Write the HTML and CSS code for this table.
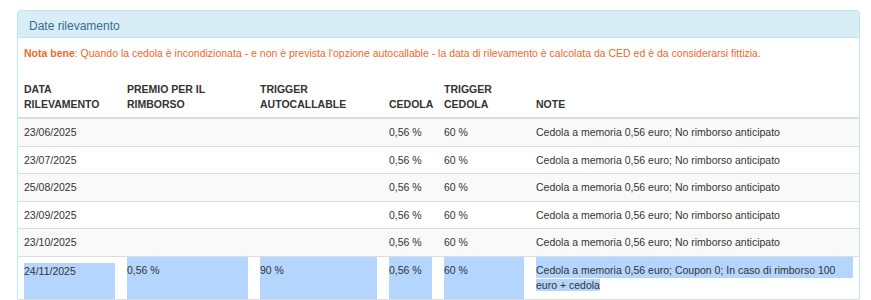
FILE: index.html
```html
<!DOCTYPE html>
<html lang="it">
<head>
<meta charset="utf-8">
<title>Date rilevamento</title>
<link rel="stylesheet" href="styles.css">
</head>
<body>
<div class="panel">
  <div class="panel-heading">Date rilevamento</div>
  <p class="note"><strong>Nota bene</strong>: Quando la cedola è incondizionata - e non è prevista l'opzione autocallable - la data di rilevamento è calcolata da CED ed è da considerarsi fittizia.</p>
  <table class="table">
    <colgroup>
      <col class="c1"><col class="c2"><col class="c3"><col class="c4"><col class="c5"><col class="c6">
    </colgroup>
    <thead>
      <tr>
        <th>Data rilevamento</th>
        <th>Premio per il rimborso</th>
        <th>Trigger autocallable</th>
        <th>Cedola</th>
        <th>Trigger cedola</th>
        <th>Note</th>
      </tr>
    </thead>
    <tbody>
      <tr class="odd"><td>23/06/2025</td><td></td><td></td><td>0,56 %</td><td>60 %</td><td>Cedola a memoria 0,56 euro; No rimborso anticipato</td></tr>
      <tr><td>23/07/2025</td><td></td><td></td><td>0,56 %</td><td>60 %</td><td>Cedola a memoria 0,56 euro; No rimborso anticipato</td></tr>
      <tr class="odd"><td>25/08/2025</td><td></td><td></td><td>0,56 %</td><td>60 %</td><td>Cedola a memoria 0,56 euro; No rimborso anticipato</td></tr>
      <tr><td>23/09/2025</td><td></td><td></td><td>0,56 %</td><td>60 %</td><td>Cedola a memoria 0,56 euro; No rimborso anticipato</td></tr>
      <tr class="odd"><td>23/10/2025</td><td></td><td></td><td>0,56 %</td><td>60 %</td><td>Cedola a memoria 0,56 euro; No rimborso anticipato</td></tr>
      <tr class="selected">
        <td class="sel-first">24/11/2025</td>
        <td class="sel-cell"><div class="sel-inner">0,56 %</div></td>
        <td class="sel-cell"><div class="sel-inner">90 %</div></td>
        <td class="sel-cell"><div class="sel-inner">0,56 %</div></td>
        <td class="sel-cell"><div class="sel-inner">60 %</div></td>
        <td class="sel-note"><div class="sel-line">Cedola a memoria 0,56 euro; Coupon 0; In caso di rimborso 100</div><span class="sel-text">euro + cedola</span></td>
      </tr>
    </tbody>
  </table>
</div>
</body>
</html>
```

FILE: styles.css
```css
html, body {
  margin: 0;
  background: #ffffff;
}

body {
  padding: 10px 11px 0 17px;
  font-family: "Liberation Sans", Arial, Helvetica, sans-serif;
  color: #333333;
  font-size: 10.5px;
  line-height: 15px;
}

.panel {
  border: 1px solid #bce8f1;
  border-radius: 3px;
  background: #ffffff;
}

.panel-heading {
  background: #d9edf7;
  color: #31708f;
  font-size: 12px;
  line-height: 16px;
  padding: 7px 11px 3px;
  border-bottom: 1px solid #bce8f1;
  border-radius: 2px 2px 0 0;
}

.note {
  margin: 0;
  padding: 8px 6px 15px;
  color: #f0682b;
}

.note strong {
  font-weight: bold;
}

.table {
  width: 100%;
  border-collapse: collapse;
  table-layout: fixed;
}

.c1 { width: 103px; }
.c2 { width: 133px; }
.c3 { width: 129px; }
.c4 { width: 55px; }
.c5 { width: 92px; }
.c6 { width: auto; }

.table th {
  text-align: left;
  vertical-align: bottom;
  text-transform: uppercase;
  font-weight: bold;
  padding: 6px 6px 5px;
  border-bottom: 2px solid #dddddd;
}

.table td {
  text-align: left;
  vertical-align: top;
  padding: 6px 6px 5.5px;
  border-top: 1px solid #dddddd;
}

.table tr.odd td {
  background: #f9f9f9;
}

.table tr.selected td {
  border-bottom: 1px solid #dddddd;
  background-color: #ffffff;
}

.table tr.selected td.sel-first {
  padding: 7px 6px 0;
  background: #b4d5fe;
  background-clip: content-box;
}

.table tr.selected td.sel-cell {
  padding: 0 6px;
  background: #b4d5fe;
  background-clip: content-box;
}

.sel-inner {
  padding-top: 6px;
}

.table tr.selected td.sel-note {
  padding: 0 6px 6px;
}

.sel-line {
  padding-top: 6px;
  background: #b4d5fe;
}

.sel-text {
  background: #b4d5fe;
}
```
